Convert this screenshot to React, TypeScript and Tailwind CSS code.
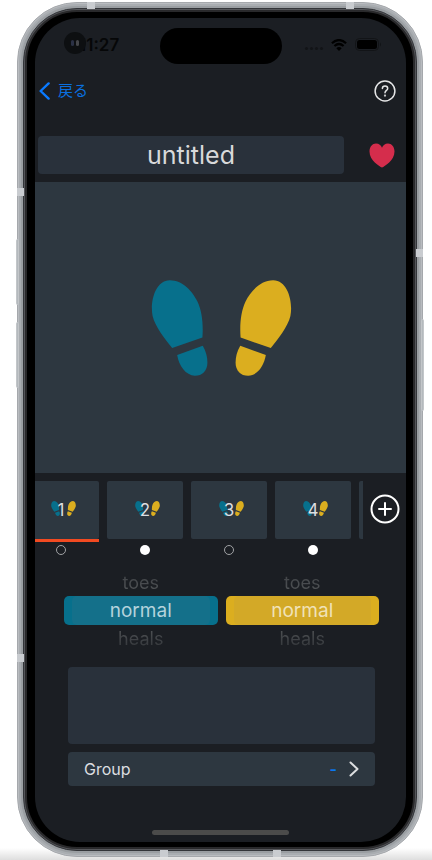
import { useState } from "react";
import type { ReactNode } from "react";

const TEAL = "#07708c";
const GOLD = "#dbae1f";

function Foot({ color, side, className }: { color: string; side: "left" | "right"; className: string }) {
  return (
    <svg viewBox="66 59 170 289" className={className} aria-hidden="true">
      <g fill={color} transform={side === "right" ? "translate(302 0) scale(-1 1)" : undefined}>
        <path d="M122 60C160 60 190 93 205 124C219 154 223 192 220 232L129 264C107 236 78 200 70 167C62 130 76 60 122 60Z" />
        <path d="M144 285L221 257C231 274 235 292 235 307C235 332 220 347 197 347C170 347 149 317 144 285Z" />
      </g>
    </svg>
  );
}

function StatusBar() {
  return (
    <div className="relative flex h-[53px] shrink-0 items-center justify-between pr-[25px] pl-11 text-[#060708]">
      <time className="text-[17px] font-semibold leading-5">11:27</time>
      <span className="absolute top-[14px] left-[29px] flex size-[22px] items-center justify-center gap-[2px] rounded-full bg-[#0d0f11]">
        <span className="h-[6px] w-[3px] rounded-full bg-[#2b3145]" />
        <span className="h-[6px] w-[3px] rounded-full bg-[#45464a]" />
      </span>
      <span className="absolute top-[10px] left-1/2 h-[36px] w-[122px] -translate-x-1/2 rounded-full bg-black" />
      <div className="flex items-center gap-2">
        <span className="flex gap-[2px] pt-2">
          {[0, 1, 2, 3].map((n) => (
            <span key={n} className="size-[3px] rounded-full bg-[#121417]" />
          ))}
        </span>
        <svg viewBox="0 0 16 12" className="h-3 w-4" aria-hidden="true">
          <g fill="none" stroke="black" strokeWidth="2.2">
            <path d="M.9 4.3Q8-2.2 15.1 4.3" />
            <path d="M3.4 7Q8 3 12.6 7" />
          </g>
          <path d="M8 12L5.3 9.2Q8 7 10.7 9.2Z" fill="black" />
        </svg>
        <svg viewBox="0 0 26 13" className="h-[13px] w-[26px]" aria-hidden="true">
          <rect x=".5" y=".5" width="23" height="12" rx="4" fill="none" stroke="#121417" />
          <rect x="2" y="2" width="20" height="9" rx="2.5" fill="black" />
          <path d="M25 4.5v4q1-.7 1-2t-1-2z" fill="#121417" />
        </svg>
      </div>
    </div>
  );
}

function Step({ number, active, filled, onSelect }: { number: number; active: boolean; filled: boolean; onSelect: () => void }) {
  return (
    <div className="flex w-[76px] shrink-0 flex-col items-center">
      <button
        type="button"
        onClick={onSelect}
        aria-pressed={active}
        className="grid h-[58px] w-full place-items-center rounded-[2px] bg-[#2d3740]"
      >
        <span className="col-start-1 row-start-1 flex gap-[7px] pb-1 pl-1">
          <Foot color={TEAL} side="left" className="h-[15px] w-[9px]" />
          <Foot color={GOLD} side="right" className="h-[15px] w-[9px]" />
        </span>
        <span className="col-start-1 row-start-1 text-[17px] leading-5 text-[#dcdee0]">{number}</span>
      </button>
      <span className={active ? "h-[3px] w-full bg-[#f24a21]" : "h-[3px] w-full"} />
      <span
        className={
          filled
            ? "mt-[3px] size-[10px] rounded-full bg-white"
            : "mt-[3px] size-[10px] rounded-full border border-[#a0a2a4]"
        }
      />
    </div>
  );
}

function Picker({ label, outer, inner }: { label: string; outer: string; inner: string }) {
  return (
    <div role="listbox" aria-label={label} className="flex-1 text-center text-lg">
      <div role="option" aria-selected="false" className="h-[27px] bg-linear-to-b from-[#3b3e42] to-[#55585b] bg-clip-text leading-[27px] text-transparent">
        toes
      </div>
      <div role="option" aria-selected="true" className={`rounded-[5px] px-2 ${outer}`}>
        <div className={`rounded-[5px] text-[19px] leading-[29px] ${inner}`}>normal</div>
      </div>
      <div role="option" aria-selected="false" className="h-[27px] bg-linear-to-b from-[#55585b] to-[#2e3135] bg-clip-text leading-[27px] text-transparent">
        heals
      </div>
    </div>
  );
}

function PhoneFrame({ children }: { children: ReactNode }) {
  const notch = "absolute bg-[#c9ccd0]";
  const key = "absolute w-[3px] rounded-sm border border-[#c3c6c9] bg-[#b4b9bd]";
  return (
    <div className="relative rounded-[60px] border border-[#a5a8ac] bg-[#b9bcc0] p-px">
      <span className={`${key} top-[236px] -left-[2px] h-[66px]`} />
      <span className={`${key} top-[319px] -left-[2px] h-[66px]`} />
      <span className={`${key} top-[316px] -right-[2px] h-[92px]`} />
      <div className="rounded-[58px] border-2 border-[#a9adb1] bg-[#9a9ea2] p-[2px]">
        <div className="rounded-[54px] border border-[#333539] bg-[#55565a] p-px">
          <div className="rounded-[52px] border-2 border-[#29292b] bg-black pt-[6px] pr-[7px] pb-[5px] pl-2">{children}</div>
        </div>
      </div>
      <span className={`${notch} -top-px left-[69px] h-[7px] w-2`} />
      <span className={`${notch} -top-px right-[68px] h-[7px] w-2`} />
      <span className={`${notch} -bottom-px left-[142px] h-[7px] w-2`} />
      <span className={`${notch} -bottom-px right-[141px] h-[7px] w-2`} />
      <span className={`${notch} top-[185px] -left-px h-2 w-[7px]`} />
      <span className={`${notch} top-[246px] -right-px h-2 w-[7px]`} />
      <span className={`${notch} top-[651px] -left-px h-2 w-[7px]`} />
    </div>
  );
}

export default function App() {
  const [title, setTitle] = useState("untitled");
  const [note, setNote] = useState("");
  const [active, setActive] = useState(1);

  return (
    <div
      className="relative bg-white pt-[2px] pr-[9px] pb-[3px] pl-[17px]"
      style={{ fontFamily: 'Inter, "Noto Sans CJK JP", sans-serif' }}
    >
      <div className="absolute inset-x-0 bottom-0 h-3 bg-linear-to-b from-white to-[#dedede]" />
      <PhoneFrame>
        <main className="flex flex-col overflow-hidden rounded-[45px] bg-[#1b1e23]">
          <StatusBar />
          <header className="flex h-[39px] items-center justify-between pr-[10px] pl-1">
            <a href="#back" className="flex items-center gap-2 text-[15px] leading-5 text-[#0a6fdf]">
              <svg viewBox="0 0 11 18" className="h-[18px] w-[11px]" fill="none" stroke="#0a7aff" strokeWidth="2.4" strokeLinecap="round" strokeLinejoin="round" aria-hidden="true">
                <path d="M9.6 1.4L1.6 9l8 7.6" />
              </svg>
              戻る
            </a>
            <button type="button" aria-label="Help">
              <svg viewBox="0 0 22 22" className="size-[22px]" fill="none" stroke="#e4e5e6" strokeWidth="1.5" strokeLinecap="round" aria-hidden="true">
                <circle cx="11" cy="11" r="9.9" />
                <path d="M8.4 8.5C8.4 5.1 13.7 5.2 13.7 8.4C13.7 10.4 11 10.5 11 12.8" />
                <circle cx="11" cy="15.6" r=".4" />
              </svg>
            </button>
          </header>
          <div className="mt-[26px] mb-2 flex items-center pr-[11px] pl-[3px]">
            <input
              aria-label="Title"
              value={title}
              onChange={(e) => setTitle(e.target.value)}
              className="h-[38px] min-w-0 flex-1 rounded-[4px] bg-[#29313b] text-center text-[25px] text-[#d8d9da] outline-none"
            />
            <button type="button" aria-label="Favorite" className="ml-[25px]">
              <svg viewBox="0 0 26 25" className="h-[25px] w-[26px]" aria-hidden="true">
                <path fill="#d52d4c" d="M13 24.6C10.5 23.4 .5 17.5 .5 8.5C.5 3.5 3.5 .5 7 .5C10 .5 12 2.2 13 4.8C14 2.2 16 .5 19 .5C22.5 .5 25.5 3.5 25.5 8.5C25.5 17.5 15.5 23.4 13 24.6Z" />
              </svg>
            </button>
          </div>
          <section className="flex h-[291px] items-center justify-center gap-[27px] bg-[#2d3740] pl-[2px]">
            <Foot color={TEAL} side="left" className="h-[96px] w-[57px]" />
            <Foot color={GOLD} side="right" className="h-[96px] w-[57px]" />
          </section>
          <div className="mt-2 flex">
            <div className="min-w-0 flex-1 overflow-hidden">
              <div className="-ml-3 flex gap-2">
                {[1, 2, 3, 4].map((n) => (
                  <Step key={n} number={n} active={active === n} filled={n % 2 === 0} onSelect={() => setActive(n)} />
                ))}
                <button
                  type="button"
                  aria-label="Step 5"
                  onClick={() => setActive(5)}
                  className="h-[58px] w-[76px] shrink-0 rounded-[2px] bg-[#2d3740]"
                />
              </div>
            </div>
            <button type="button" aria-label="Add step" className="mt-[13px] mr-[6px] ml-[7px] h-[30px]">
              <svg viewBox="0 0 30 30" className="size-[30px]" fill="none" stroke="white" strokeWidth="2" strokeLinecap="round" aria-hidden="true">
                <circle cx="15" cy="15" r="13.5" />
                <path d="M15 9v12M9 15h12" />
              </svg>
            </button>
          </div>
          <div className="mt-[14px] flex gap-2 pr-[27px] pl-[29px]">
            <Picker label="Left foot" outer="bg-[#07708c]" inner="bg-[#14708a] text-[#b5d3dc]" />
            <Picker label="Right foot" outer="bg-[#dbae1f]" inner="bg-[#d3a927] text-[#f0e2b8]" />
          </div>
          <div className="mt-[15px] flex flex-col gap-2 pr-[31px] pl-[33px]">
            <textarea
              aria-label="Note"
              value={note}
              onChange={(e) => setNote(e.target.value)}
              className="block h-[77px] w-full resize-none rounded-[4px] bg-[#29313b] p-3 text-base text-[#d8d9da] outline-none"
            />
            <button type="button" className="flex h-[34px] items-center rounded-[4px] bg-[#2d3740] px-4 text-base text-[#dcdee0]">
              Group
              <span className="mr-3 ml-auto font-semibold text-[#0a78f0]">-</span>
              <svg viewBox="0 0 10 16" className="h-4 w-[10px]" fill="none" stroke="#dcdee0" strokeWidth="2" strokeLinecap="round" strokeLinejoin="round" aria-hidden="true">
                <path d="M1.5 1.5L8.5 8l-7 6.5" />
              </svg>
            </button>
          </div>
          <div className="mx-auto mt-11 mb-[7px] h-[5px] w-[137px] rounded-full bg-[#4b4b4a]" />
        </main>
      </PhoneFrame>
    </div>
  );
}
